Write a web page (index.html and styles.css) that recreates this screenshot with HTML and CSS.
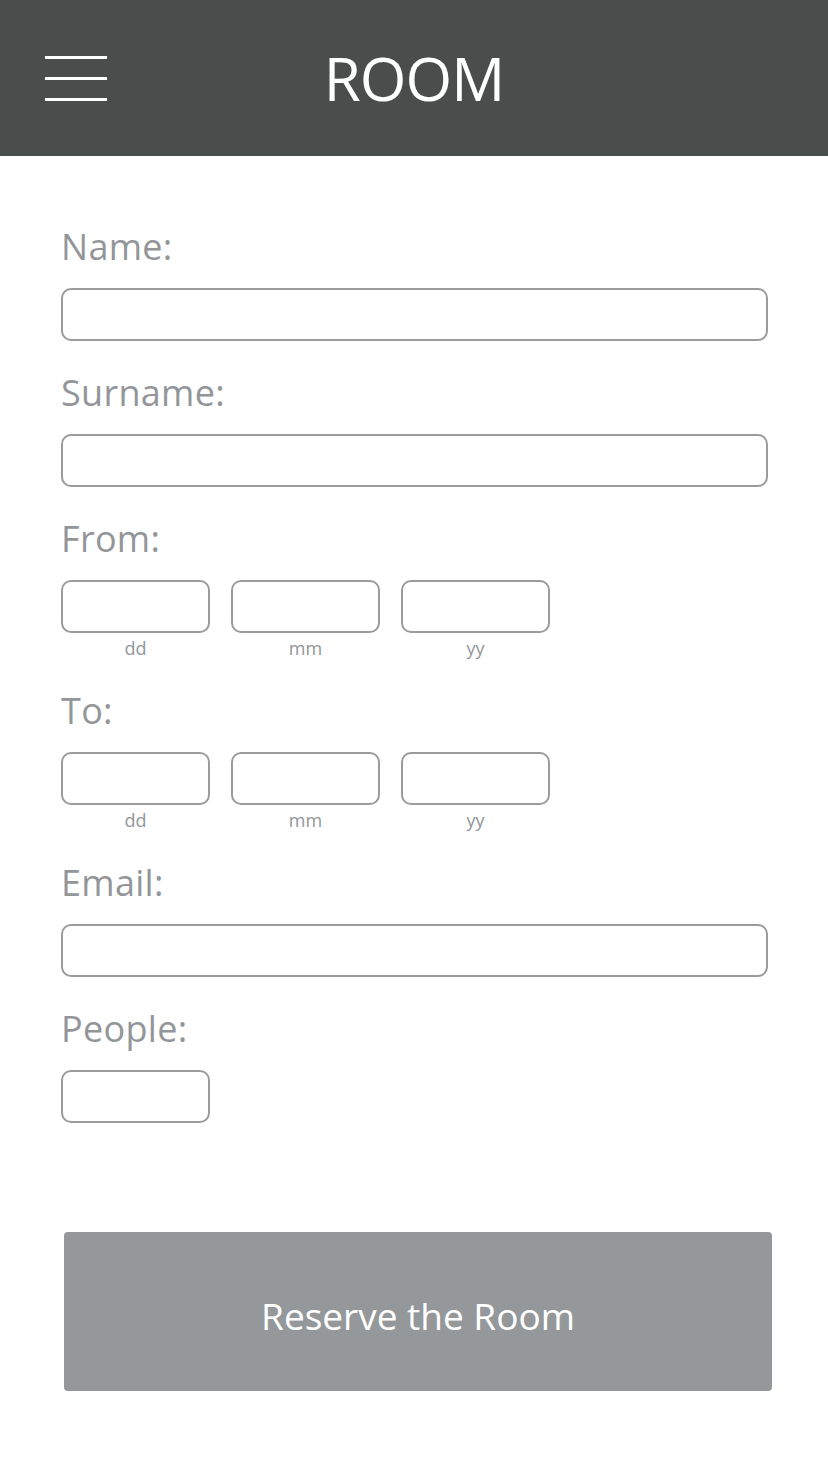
FILE: index.html
```html
<!DOCTYPE html>
<html lang="en">
<head>
<meta charset="utf-8">
<title>Room</title>
<link rel="stylesheet" href="styles.css">
</head>
<body>
<header class="topbar">
  <div class="menu" aria-label="Menu">
    <span class="menu-line"></span>
    <span class="menu-line"></span>
    <span class="menu-line"></span>
  </div>
  <h1 class="title">ROOM</h1>
  <div class="spacer"></div>
</header>
<main class="form">
  <div class="field">
    <label class="label">Name:</label>
    <div class="input input-wide"></div>
  </div>
  <div class="field">
    <label class="label">Surname:</label>
    <div class="input input-wide"></div>
  </div>
  <div class="field field-date">
    <label class="label">From:</label>
    <div class="date-row">
      <div class="date-part"><div class="input input-small"></div><span class="caption">dd</span></div>
      <div class="date-part"><div class="input input-small"></div><span class="caption">mm</span></div>
      <div class="date-part"><div class="input input-small"></div><span class="caption">yy</span></div>
    </div>
  </div>
  <div class="field field-date">
    <label class="label">To:</label>
    <div class="date-row">
      <div class="date-part"><div class="input input-small"></div><span class="caption">dd</span></div>
      <div class="date-part"><div class="input input-small"></div><span class="caption">mm</span></div>
      <div class="date-part"><div class="input input-small"></div><span class="caption">yy</span></div>
    </div>
  </div>
  <div class="field">
    <label class="label">Email:</label>
    <div class="input input-wide"></div>
  </div>
  <div class="field">
    <label class="label">People:</label>
    <div class="input input-small"></div>
  </div>
  <button class="reserve" type="button">Reserve the Room</button>
</main>
</body>
</html>
```
FILE: styles.css
```css
* { box-sizing: border-box; }
html, body { margin: 0; padding: 0; background: #ffffff; }
body { font-family: "Open Sans", "Noto Sans", sans-serif; width: 828px; }

.topbar {
  height: 156px;
  background: #4b4d4c;
  display: grid;
  grid-template-columns: 1fr auto 1fr;
  align-items: center;
}
.menu {
  margin-left: 45px;
  width: 62px;
  display: flex;
  flex-direction: column;
  gap: 18px;
}
.menu-line {
  display: block;
  height: 3px;
  background: #ffffff;
}
.title {
  margin: 0;
  color: #ffffff;
  font-weight: 400;
  font-size: 60px;
  line-height: 60px;
  letter-spacing: -1px;
}

.form {
  padding: 69px 61px 0 61px;
  display: flex;
  flex-direction: column;
}
.field {
  display: flex;
  flex-direction: column;
  margin-bottom: 30px;
}
.label {
  color: #939699;
  font-size: 36px;
  line-height: 44px;
  margin-bottom: 19px;
  letter-spacing: 0.3px;
}
.input {
  height: 53px;
  border: 2px solid #999b9d;
  border-radius: 10px;
  background: #ffffff;
}
.input-wide { width: 707px; }
.input-small { width: 149px; }

.field-date { margin-bottom: 29px; }
.date-row {
  display: flex;
  gap: 21px;
}
.date-part {
  display: flex;
  flex-direction: column;
  align-items: center;
}
.caption {
  margin-top: 3px;
  color: #939699;
  font-size: 18px;
  line-height: 24px;
}

.reserve {
  margin: 79px 0 0 3px;
  width: 708px;
  height: 159px;
  border: none;
  border-radius: 4px;
  background: #95989a;
  color: #ffffff;
  font-family: "Open Sans", "Noto Sans", sans-serif;
  font-size: 37px;
  padding: 8px 0 0 0;
}
```
